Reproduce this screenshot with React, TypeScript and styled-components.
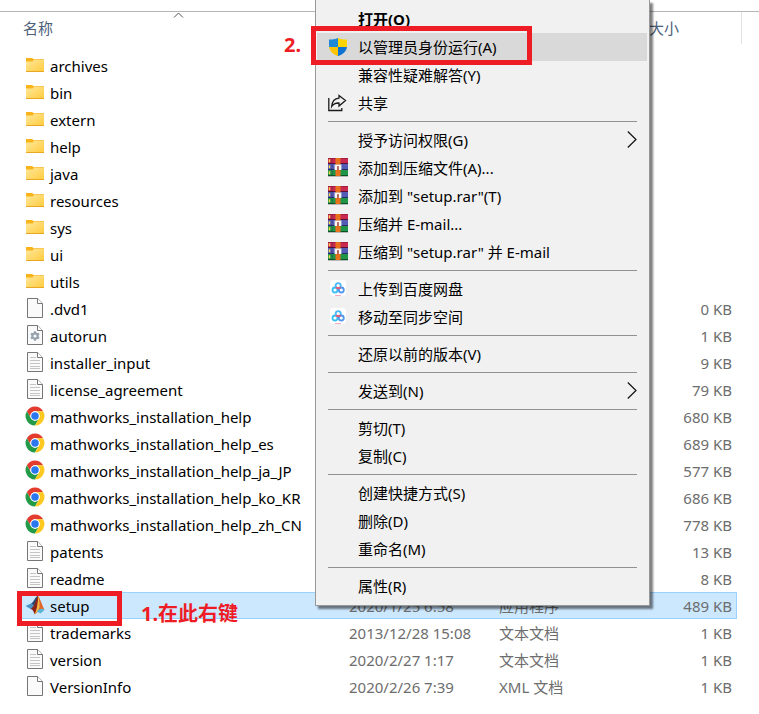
import React from "react";
import styled, { createGlobalStyle, css } from "styled-components";

const GlobalStyle = createGlobalStyle`
  * { box-sizing: border-box; }
  body {
    margin: 0;
    background: #fff;
    color: #000;
    font-family: "Noto Sans", "Noto Sans CJK SC", sans-serif;
    font-size: 15px;
    line-height: 20px;
  }
`;

/* ---------- icons ---------- */

const FolderIcon = () => (
  <svg width="20" height="20" viewBox="0 0 20 20" aria-hidden="true">
    <defs>
      <linearGradient id="folderFace" x1="0" y1="0" x2="1" y2="1">
        <stop offset="0" stopColor="#ffe79a" />
        <stop offset="1" stopColor="#ffcb3d" />
      </linearGradient>
    </defs>
    <path d="M1 3h6.200l1.400 1.200H19v3H1z" fill="#f9b41b" />
    <path d="M1 6.500h6.500l1.500-1.400h10V17H1z" fill="url(#folderFace)" />
    <path d="M1 16h18v1H1z" fill="#eaa724" />
  </svg>
);

const FileIcon = ({ kind }: { kind: string }) => (
  <svg width="20" height="20" viewBox="0 0 20 20" aria-hidden="true">
    <path d="M2.500.5h10.200l4.800 5v14h-15z" fill="#fafafa" stroke="#767676" />
    <path d="M12.500.5v5h5" fill="#fff" stroke="#767676" />
    {kind === "text" && (
      <path d="M5 5.500h6M5 8.500h10M5 11.500h10M5 14.500h10M5 16.500h10" stroke="#c4c4c4" fill="none" />
    )}
    {kind === "config" && (
      <g stroke="#96a3ae" fill="none">
        <circle cx="10" cy="11" r="2.700" strokeWidth="2.200" />
        <path
          d="M10 6.300v2M10 13.700v2M5.900 8.600l1.800 1.100M12.300 12.300l1.800 1.100M5.900 13.400l1.800-1.100M12.300 9.700l1.800-1.100"
          strokeWidth="2"
        />
      </g>
    )}
  </svg>
);

const ChromeIcon = () => (
  <svg width="20" height="20" viewBox="0 0 48 48" aria-hidden="true">
    <circle cx="24" cy="24" r="22.500" fill="#fff" />
    <path d="M4.500 12.700A22.500 22.500 0 0 1 43.500 12.700H24A11.300 11.300 0 0 0 14.200 29.600z" fill="#e33b2e" />
    <path d="M4.500 12.700 14.200 29.600A11.300 11.300 0 0 0 33.800 29.600L24 46.500A22.500 22.500 0 0 1 4.500 12.700z" fill="#229a48" />
    <path d="M43.500 12.700A22.500 22.500 0 0 1 24 46.500L33.800 29.600A11.300 11.300 0 0 0 24 12.700z" fill="#fdc921" />
    <circle cx="24" cy="24" r="11.300" fill="#fff" />
    <circle cx="24" cy="24" r="9" fill="#2b78ee" />
  </svg>
);

const MatlabIcon = () => (
  <svg width="20" height="20" viewBox="0 0 20 20" aria-hidden="true">
    <path d="M.5 11 6 8.600l3.400 2.200L5.600 14z" fill="#4a94c9" />
    <path d="M6 8.600C8.600 7.500 9.500 2.500 13 .7L11 9.500 7.800 14.200 5.600 14l3.800-3.200z" fill="#2a4b73" />
    <path d="M13 .7C11.300 3 10.800 8 7.600 12.300L5.600 14c2.300 0 3.200 3.500 4.200 5.200L14 13z" fill="#8d2418" />
    <path d="M13 .7c2 2.300 3.700 8.300 6.500 14.300-2.500-1.600-4.700-.5-6.500 1.500-1.200 1.300-2.200 2.400-3.200 2.700C12.500 14 13.300 7.500 13 .7z" fill="#e0662a" />
    <path d="M13 .7c1.200 3.500 1.800 8.300 1.500 11.500-1 2.800-2.500 5.400-4.700 7C12.200 13.500 13.200 7.500 13 .7z" fill="#f6b846" />
    <path d="M12 16.500c2-3 4.800-3.800 7.500-1.500l-4 3.500z" fill="#58b5d8" />
  </svg>
);

const ShieldIcon = () => (
  <svg width="20" height="20" viewBox="0 0 20 20" aria-hidden="true">
    <path d="M10 1C7.500 2.300 4 2.600 1 2.600V10h9z" fill="#2089d5" />
    <path d="M10 1c2.500 1.300 6 1.600 9 1.600V10h-9z" fill="#ffd500" />
    <path d="M1 10c.6 4.500 4.500 7.500 9 9.200V10z" fill="#ffc400" />
    <path d="M19 10c-.6 4.500-4.500 7.500-9 9.200V10z" fill="#0d74d1" />
  </svg>
);

const ShareIcon = () => (
  <svg width="20" height="20" viewBox="0 0 20 20" fill="none" stroke="#1c1c1c" strokeWidth="1.300" aria-hidden="true">
    <path d="M.8 5v12.500h13V15" />
    <path d="M11 2.500 17.500 7.500 11 13v-3C7.500 9.800 5.300 11 3.700 13.500c.3-4.700 2.800-8 7.300-8.400z" />
  </svg>
);

const RarIcon = () => (
  <svg width="20" height="20" viewBox="0 0 20 20" aria-hidden="true">
    <path d="M0 0h20v5H0z" fill="#c9284f" />
    <path d="M0 0h20v1H0z" fill="#a51d42" />
    <path d="M0 5h20v1H0z" fill="#571135" />
    <path d="M0 6h20v5H0z" fill="#535bb5" />
    <path d="M0 11h20v1H0z" fill="#272d68" />
    <path d="M0 12h20v6H0z" fill="#209447" />
    <path d="M0 17h20v1H0z" fill="#0c5425" />
    <path d="M0 18h20v1H0z" fill="#b9b9b9" />
    <path d="M1 1.500h1v2.500H1zM1 7.500h1V10H1zM1 13.500h1V16H1z" fill="#ffdb4a" stroke="#ffdb4a" strokeWidth=".4" />
    <path d="M4 .5v17" stroke="#26264a" strokeOpacity=".35" />
    <path d="M7.500 0h5v18h-5z" fill="#e9711e" />
    <path d="M6.500 6.500h7V12h-7z" fill="#dcdcdc" />
    <path d="M8 12V8h4v4" stroke="#fff" strokeWidth="1.500" fill="none" />
    <path d="M9.300 8h1.400v4.200H9.300z" fill="#a33c2c" />
  </svg>
);

const NetdiskIcon = () => (
  <svg width="20" height="20" viewBox="0 0 20 20" aria-hidden="true">
    <rect x="2" y="1" width="16" height="16" rx="3.500" fill="#fff" />
    <g fill="none" strokeWidth="1.800">
      <circle cx="10.200" cy="6.800" r="2.600" stroke="#49b8f5" />
      <circle cx="7" cy="11" r="2.500" stroke="#38c0f4" />
      <circle cx="13.300" cy="11" r="2.500" stroke="#5297ee" />
      <path d="M7.900 8.200c1 1.300 3.600 1.300 4.600 0M8.600 9.600l1.400-.8 1.500 1" stroke="#ed5872" />
    </g>
    <path d="M7 16.500h6" stroke="#f4a9c3" />
  </svg>
);

const ICONS: Record<string, React.ReactNode> = {
  folder: <FolderIcon />,
  blank: <FileIcon kind="blank" />,
  config: <FileIcon kind="config" />,
  text: <FileIcon kind="text" />,
  chrome: <ChromeIcon />,
  matlab: <MatlabIcon />,
  shield: <ShieldIcon />,
  share: <ShareIcon />,
  rar: <RarIcon />,
  netdisk: <NetdiskIcon />,
};

/* ---------- file list ---------- */

const Explorer = styled.main`
  position: relative;
  padding-top: 11px;
  overflow: hidden;
`;

const ListFrame = styled.div`
  position: relative;
  border-top: 1px solid #b5b5b5;
  padding: 0 22px 13px;
`;

const FileTable = styled.table`
  width: 100%;
  table-layout: fixed;
  border-collapse: separate;
  border-spacing: 0;
`;

const Column = styled.col<{ $width?: number }>`
  ${({ $width }) => $width && css`width: ${$width}px;`}
`;

const HeadCell = styled.th<{ $inset?: boolean }>`
  height: 40px;
  padding: 6px 0 0 ${({ $inset }) => ($inset ? 10 : 1)}px;
  vertical-align: top;
  text-align: left;
  font-weight: 400;
  color: #4c607a;
`;

const SortButton = styled.button`
  display: block;
  padding: 0;
  border: 0;
  background: none;
  font: inherit;
  color: inherit;
`;

const SortMark = styled.svg`
  position: absolute;
  top: 0;
  left: 173px;
`;

const ColumnEdge = styled.span`
  position: absolute;
  top: 0;
  right: 17px;
  width: 1px;
  height: 32px;
  background: #e2e2e2;
`;

const Cell = styled.td<{ $align?: "right" }>`
  height: 27px;
  padding: 0 ${({ $align }) => ($align ? 5 : 0)}px 0 ${({ $align }) => ($align ? 0 : 10)}px;
  text-align: ${({ $align }) => $align ?? "left"};
  white-space: nowrap;
  color: #6d6d6d;
`;

const NameCell = styled(Cell)`
  position: relative;
  padding-left: 3px;
  color: #000;
`;

const FileRow = styled.tr<{ $selected?: boolean }>`
  ${({ $selected }) =>
    $selected &&
    css`
      ${Cell} {
        background: #cce8ff;
        box-shadow: inset 0 1px #99d1ff, inset 0 -1px #99d1ff;
      }
      ${Cell}:last-child {
        box-shadow: inset 0 1px #99d1ff, inset -1px -1px #99d1ff;
      }
    `}
`;

const FileName = styled.span`
  display: flex;
  align-items: center;
  gap: 5px;
  height: 27px;

  svg {
    flex: none;
    margin-bottom: 1px;
  }
`;

/* ---------- context menu ---------- */

const Menu = styled.div`
  position: absolute;
  top: 0;
  left: 315px;
  width: 335px;
  padding: 5px 2px 5px 1px;
  background: #f1f1f1;
  border: 1px solid #989898;
  border-top: 0;
  box-shadow: 3px 3px 2px rgba(0, 0, 0, 0.5);
`;

const MenuItem = styled.button<{ $active?: boolean; $strong?: boolean }>`
  position: relative;
  display: flex;
  align-items: center;
  gap: 10px;
  width: 100%;
  height: 28px;
  padding: 0 10px 0 11px;
  border: 0;
  background: ${({ $active }) => ($active ? "#d9d9d9" : "transparent")};
  color: #000;
  font: inherit;
  font-weight: ${({ $strong }) => ($strong ? 700 : 400)};
  text-align: left;
  white-space: nowrap;
`;

const IconSlot = styled.span`
  flex: none;
  width: 20px;
  height: 20px;
`;

const ItemLabel = styled.span`
  flex: 1;
`;

const Separator = styled.hr`
  height: 1px;
  margin: 4px 10px 4px 11px;
  border: 0;
  background: #919191;
`;

/* ---------- red marks ---------- */

const Mark = styled.span<{ $target: "file" | "command" }>`
  position: absolute;
  z-index: 1;
  border: 5px solid #ee1c25;
  pointer-events: none;
  ${({ $target }) =>
    $target === "file"
      ? css`top: -1px; left: -5px; width: 105px; height: 35px;`
      : css`top: -7px; left: -6px; width: 221px; height: 39px;`}
`;

const Note = styled.strong<{ $target: "file" | "command" }>`
  position: absolute;
  font-size: 20px;
  line-height: 28px;
  font-weight: 700;
  white-space: nowrap;
  color: #ee1c25;
  ${({ $target }) =>
    $target === "file" ? css`top: 8px; left: 119px;` : css`top: -2px; left: -33px;`}
`;

/* ---------- data ---------- */

type Entry = { name: string; icon: string; date?: string; type?: string; size?: string; selected?: boolean };

const ENTRIES: Entry[] = [
  ...["archives", "bin", "extern", "help", "java", "resources", "sys", "ui", "utils"].map((name) => ({
    name,
    icon: "folder",
  })),
  { name: ".dvd1", icon: "blank", size: "0 KB" },
  { name: "autorun", icon: "config", size: "1 KB" },
  { name: "installer_input", icon: "text", size: "9 KB" },
  { name: "license_agreement", icon: "text", size: "79 KB" },
  { name: "mathworks_installation_help", icon: "chrome", size: "680 KB" },
  { name: "mathworks_installation_help_es", icon: "chrome", size: "689 KB" },
  { name: "mathworks_installation_help_ja_JP", icon: "chrome", size: "577 KB" },
  { name: "mathworks_installation_help_ko_KR", icon: "chrome", size: "686 KB" },
  { name: "mathworks_installation_help_zh_CN", icon: "chrome", size: "778 KB" },
  { name: "patents", icon: "text", size: "13 KB" },
  { name: "readme", icon: "text", size: "8 KB" },
  { name: "setup", icon: "matlab", date: "2020/1/25 6:58", type: "应用程序", size: "489 KB", selected: true },
  { name: "trademarks", icon: "text", date: "2013/12/28 15:08", type: "文本文档", size: "1 KB" },
  { name: "version", icon: "text", date: "2020/2/27 1:17", type: "文本文档", size: "1 KB" },
  { name: "VersionInfo", icon: "blank", date: "2020/2/26 7:39", type: "XML 文档", size: "1 KB" },
];

type Command = { label: string; icon?: string; active?: boolean; strong?: boolean; submenu?: boolean };

const COMMAND_GROUPS: Command[][] = [
  [
    { label: "打开(O)", strong: true },
    { label: "以管理员身份运行(A)", icon: "shield", active: true },
    { label: "兼容性疑难解答(Y)" },
    { label: "共享", icon: "share" },
  ],
  [
    { label: "授予访问权限(G)", submenu: true },
    { label: "添加到压缩文件(A)...", icon: "rar" },
    { label: '添加到 "setup.rar"(T)', icon: "rar" },
    { label: "压缩并 E-mail...", icon: "rar" },
    { label: '压缩到 "setup.rar" 并 E-mail', icon: "rar" },
  ],
  [
    { label: "上传到百度网盘", icon: "netdisk" },
    { label: "移动至同步空间", icon: "netdisk" },
  ],
  [{ label: "还原以前的版本(V)" }],
  [{ label: "发送到(N)", submenu: true }],
  [{ label: "剪切(T)" }, { label: "复制(C)" }],
  [{ label: "创建快捷方式(S)" }, { label: "删除(D)" }, { label: "重命名(M)" }],
  [{ label: "属性(R)" }],
];

export default function App() {
  return (
    <>
      <GlobalStyle />
      <Explorer>
        <ListFrame>
          <SortMark width="11" height="7" viewBox="0 0 11 7" fill="none" stroke="#555">
            <path d="M1 5.500 5.500 1 10 5.500" />
          </SortMark>
          <ColumnEdge />
          <FileTable>
            <colgroup>
              <Column $width={317} />
              <Column $width={150} />
              <Column $width={150} />
              <Column />
            </colgroup>
            <thead>
              <tr>
                <HeadCell>
                  <SortButton type="button">名称</SortButton>
                </HeadCell>
                <HeadCell />
                <HeadCell />
                <HeadCell $inset>
                  <SortButton type="button">大小</SortButton>
                </HeadCell>
              </tr>
            </thead>
            <tbody>
              {ENTRIES.map((entry) => (
                <FileRow key={entry.name} $selected={entry.selected}>
                  <NameCell>
                    <FileName>
                      {ICONS[entry.icon]}
                      {entry.name}
                    </FileName>
                    {entry.selected && (
                      <>
                        <Mark $target="file" />
                        <Note $target="file">1.在此右键</Note>
                      </>
                    )}
                  </NameCell>
                  <Cell>{entry.date}</Cell>
                  <Cell>{entry.type}</Cell>
                  <Cell $align="right">{entry.size}</Cell>
                </FileRow>
              ))}
            </tbody>
          </FileTable>
        </ListFrame>
        <Menu role="menu">
          {COMMAND_GROUPS.map((group, index) => (
            <React.Fragment key={group[0].label}>
              {index > 0 && <Separator />}
              {group.map((command) => (
                <MenuItem
                  key={command.label}
                  type="button"
                  role="menuitem"
                  $active={command.active}
                  $strong={command.strong}
                >
                  <IconSlot>{command.icon && ICONS[command.icon]}</IconSlot>
                  <ItemLabel>{command.label}</ItemLabel>
                  {command.submenu && (
                    <svg width="10" height="18" viewBox="0 0 10 18" fill="none" stroke="#111" strokeWidth="1.200" aria-hidden="true">
                      <path d="M.8 .5 9 8.500 .8 16.500" />
                    </svg>
                  )}
                  {command.active && (
                    <>
                      <Mark $target="command" />
                      <Note $target="command">2.</Note>
                    </>
                  )}
                </MenuItem>
              ))}
            </React.Fragment>
          ))}
        </Menu>
      </Explorer>
    </>
  );
}
